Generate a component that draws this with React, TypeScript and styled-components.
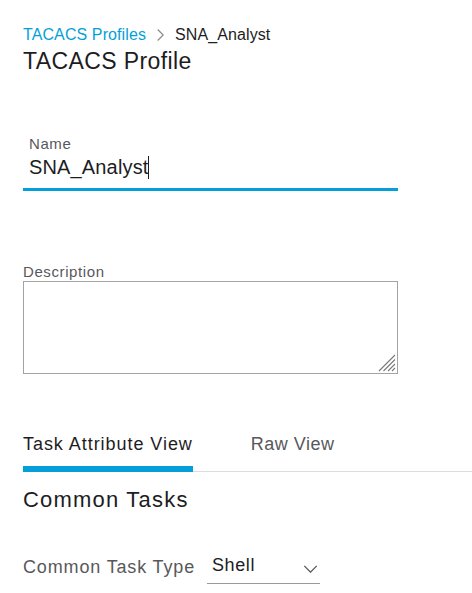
import styled, { createGlobalStyle } from "styled-components"

const GlobalStyle = createGlobalStyle`
  html, body {
    margin: 0;
    padding: 0;
    background: #ffffff;
  }
  body {
    font-family: "Liberation Sans", Arial, sans-serif;
    color: #1d1d1f;
  }
`

export default function App() {
  return (
    <Page>
      <GlobalStyle />
      <Breadcrumb>
        <CrumbLink>TACACS Profiles</CrumbLink>
        <CrumbChevron viewBox="0 0 7 12" aria-hidden>
          <path d="M0.7 0.5 L6.2 6 L0.7 11.5" />
        </CrumbChevron>
        <CrumbCurrent>SNA_Analyst</CrumbCurrent>
      </Breadcrumb>
      <Title>TACACS Profile</Title>

      <NameField>
        <FieldLabel $inset>Name</FieldLabel>
        <NameValue>
          SNA_Analyst
          <Caret />
        </NameValue>
      </NameField>

      <DescriptionField>
        <FieldLabel>Description</FieldLabel>
        <TextBox>
          <ResizeGrip viewBox="0 0 18 18" aria-hidden>
            <path d="M17 1 L1 17 M17 5.5 L5.5 17 M17 10 L10 17 M17 14 L14 17" />
          </ResizeGrip>
        </TextBox>
      </DescriptionField>

      <Tabs>
        <Tab $active>Task Attribute View</Tab>
        <Tab>Raw View</Tab>
      </Tabs>

      <SectionTitle>Common Tasks</SectionTitle>

      <SelectRow>
        <SelectLabel>Common Task Type</SelectLabel>
        <Select>
          <SelectValue>Shell</SelectValue>
          <SelectChevron viewBox="0 0 16 9" aria-hidden>
            <path d="M1 1 L8 8 L15 1" />
          </SelectChevron>
        </Select>
      </SelectRow>
    </Page>
  )
}

const Page = styled.div`
  width: 472px;
  height: 593px;
  overflow: hidden;
  padding: 25px 0 0 23px;
  box-sizing: border-box;
`

const Breadcrumb = styled.div`
  display: flex;
  align-items: center;
  height: 20px;
  font-size: 16px;
  line-height: 20px;
  letter-spacing: 0.1px;
`

const CrumbLink = styled.span`
  color: #049fd9;
`

const CrumbChevron = styled.svg`
  width: 7px;
  height: 12px;
  margin: 0 11px 0 11px;
  fill: none;
  stroke: #8a8a8a;
  stroke-width: 1.2;
`

const CrumbCurrent = styled.span`
  color: #1d1d1f;
`

const Title = styled.h1`
  margin: 2px 0 0;
  font-size: 23px;
  font-weight: 400;
  line-height: 28px;
  letter-spacing: 0.4px;
  color: #1d1d1f;
`

const NameField = styled.div`
  width: 375px;
  margin-top: 60px;
  padding-bottom: 9px;
  border-bottom: 3px solid #049fd9;
`

const FieldLabel = styled.div<{ $inset?: boolean }>`
  padding-left: ${(p) => (p.$inset ? "6px" : "0")};
  font-size: 15px;
  line-height: 18px;
  letter-spacing: 0.6px;
  color: #58585b;
`

const NameValue = styled.div`
  display: flex;
  align-items: center;
  height: 24px;
  margin-top: 2px;
  padding-left: 6px;
  font-size: 20px;
  line-height: 24px;
  letter-spacing: 0.15px;
  color: #1d1d1f;
`

const Caret = styled.span`
  display: inline-block;
  width: 1px;
  height: 23px;
  background: #1d1d1f;
`

const DescriptionField = styled.div`
  width: 375px;
  margin-top: 72px;
`

const TextBox = styled.div`
  position: relative;
  height: 91px;
  border: 1px solid #a3a3a3;
`

const ResizeGrip = styled.svg`
  position: absolute;
  right: 1px;
  bottom: 1px;
  width: 18px;
  height: 18px;
  fill: none;
  stroke: #7a7a7a;
  stroke-width: 1.1;
`

const Tabs = styled.div`
  display: flex;
  align-items: flex-end;
  gap: 58px;
  margin-top: 59px;
  border-bottom: 1px solid #dcdcdc;
`

const Tab = styled.div<{ $active?: boolean }>`
  margin-bottom: -1px;
  padding-bottom: ${(p) => (p.$active ? "11px" : "17px")};
  font-size: 18px;
  line-height: 22px;
  letter-spacing: ${(p) => (p.$active ? "0.95px" : "0.5px")};
  color: ${(p) => (p.$active ? "#1d1d1f" : "#58585b")};
  border-bottom: ${(p) => (p.$active ? "6px solid #049fd9" : "none")};
`

const SectionTitle = styled.h2`
  margin: 15px 0 0;
  font-size: 22px;
  font-weight: 400;
  line-height: 26px;
  letter-spacing: 1.2px;
  color: #1d1d1f;
`

const SelectRow = styled.div`
  display: flex;
  align-items: flex-end;
  margin-top: 41px;
`

const SelectLabel = styled.div`
  padding-bottom: 6px;
  font-size: 18px;
  line-height: 22px;
  letter-spacing: 0.85px;
  color: #58585b;
`

const Select = styled.div`
  display: flex;
  align-items: center;
  justify-content: space-between;
  box-sizing: border-box;
  width: 113px;
  margin-left: 12px;
  padding: 0 2px 7px 5px;
  border-bottom: 1px solid #9a9a9a;
`

const SelectValue = styled.span`
  font-size: 18px;
  line-height: 22px;
  letter-spacing: 0.6px;
  color: #1d1d1f;
`

const SelectChevron = styled.svg`
  width: 15px;
  height: 8px;
  margin-top: 8px;
  fill: none;
  stroke: #58585b;
  stroke-width: 1.5;
`
